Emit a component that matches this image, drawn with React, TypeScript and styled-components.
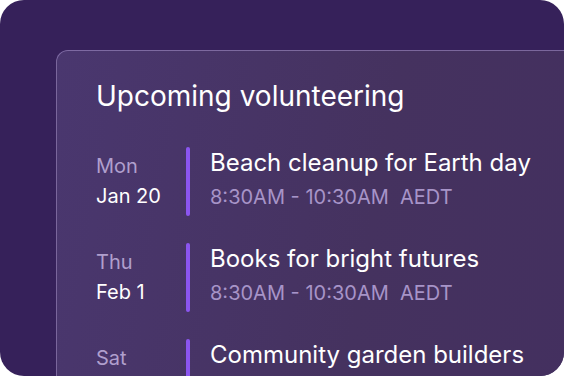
import React from 'react';
import styled, { createGlobalStyle } from 'styled-components';

const GlobalStyle = createGlobalStyle`
  html, body {
    margin: 0;
    padding: 0;
    background: #ffffff;
  }
  body {
    font-family: Inter, "Noto Sans", sans-serif;
    -webkit-font-smoothing: antialiased;
  }
`;

const Frame = styled.div`
  width: 564px;
  height: 376px;
  box-sizing: border-box;
  border-radius: 24px;
  overflow: hidden;
  background: #36215a;
  padding: 50px 0 0 56px;
`;

const Card = styled.div`
  width: 560px;
  height: 400px;
  box-sizing: border-box;
  border: 1px solid rgba(190, 170, 230, 0.45);
  border-radius: 12px;
  background: linear-gradient(100deg, #4a376f 0%, #45325f 55%, #432f5f 100%);
  padding: 30px 0 0 39px;
`;

const Heading = styled.h2`
  margin: 0 0 35px;
  font-size: 28px;
  font-weight: 400;
  line-height: 31px;
  color: #ffffff;
`;

const List = styled.div`
  display: flex;
  flex-direction: column;
  gap: 27px;
`;

const Row = styled.div`
  display: grid;
  grid-template-columns: 70px 4px 1fr;
  column-gap: 20px;
  height: 69px;
`;

const DateCol = styled.div`
  padding-top: 5px;
  display: flex;
  flex-direction: column;
`;

const DayName = styled.span`
  font-size: 20px;
  line-height: 29.5px;
  color: #b09fcd;
`;

const DayDate = styled.span`
  font-size: 20px;
  line-height: 29.5px;
  color: #ffffff;
`;

const Bar = styled.div<{ color: string }>`
  width: 4px;
  height: 69px;
  border-radius: 2px;
  background: ${props => props.color};
`;

const Info = styled.div`
  display: flex;
  flex-direction: column;
`;

const EventTitle = styled.span`
  font-size: 24px;
  line-height: 32px;
  color: #ffffff;
  white-space: nowrap;
`;

const EventTime = styled.span`
  margin-top: 3px;
  font-size: 20px;
  line-height: 30px;
  color: #a794c8;
  white-space: pre;
`;

interface EventItem {
  day: string;
  date: string;
  title: string;
  time: string;
}

const events: EventItem[] = [
  { day: 'Mon', date: 'Jan 20', title: 'Beach cleanup for Earth day', time: '8:30AM - 10:30AM  AEDT' },
  { day: 'Thu', date: 'Feb 1', title: 'Books for bright futures', time: '8:30AM - 10:30AM  AEDT' },
  { day: 'Sat', date: 'Feb 8', title: 'Community garden builders', time: '8:30AM - 10:30AM  AEDT' },
];

const App: React.FC = () => {
  return (
    <>
      <GlobalStyle />
      <Frame>
        <Card>
          <Heading>Upcoming volunteering</Heading>
          <List>
            {events.map(ev => (
              <Row key={ev.title}>
                <DateCol>
                  <DayName>{ev.day}</DayName>
                  <DayDate>{ev.date}</DayDate>
                </DateCol>
                <Bar color="#8b55f0" />
                <Info>
                  <EventTitle>{ev.title}</EventTitle>
                  <EventTime>{ev.time}</EventTime>
                </Info>
              </Row>
            ))}
          </List>
        </Card>
      </Frame>
    </>
  );
};

export default App;
